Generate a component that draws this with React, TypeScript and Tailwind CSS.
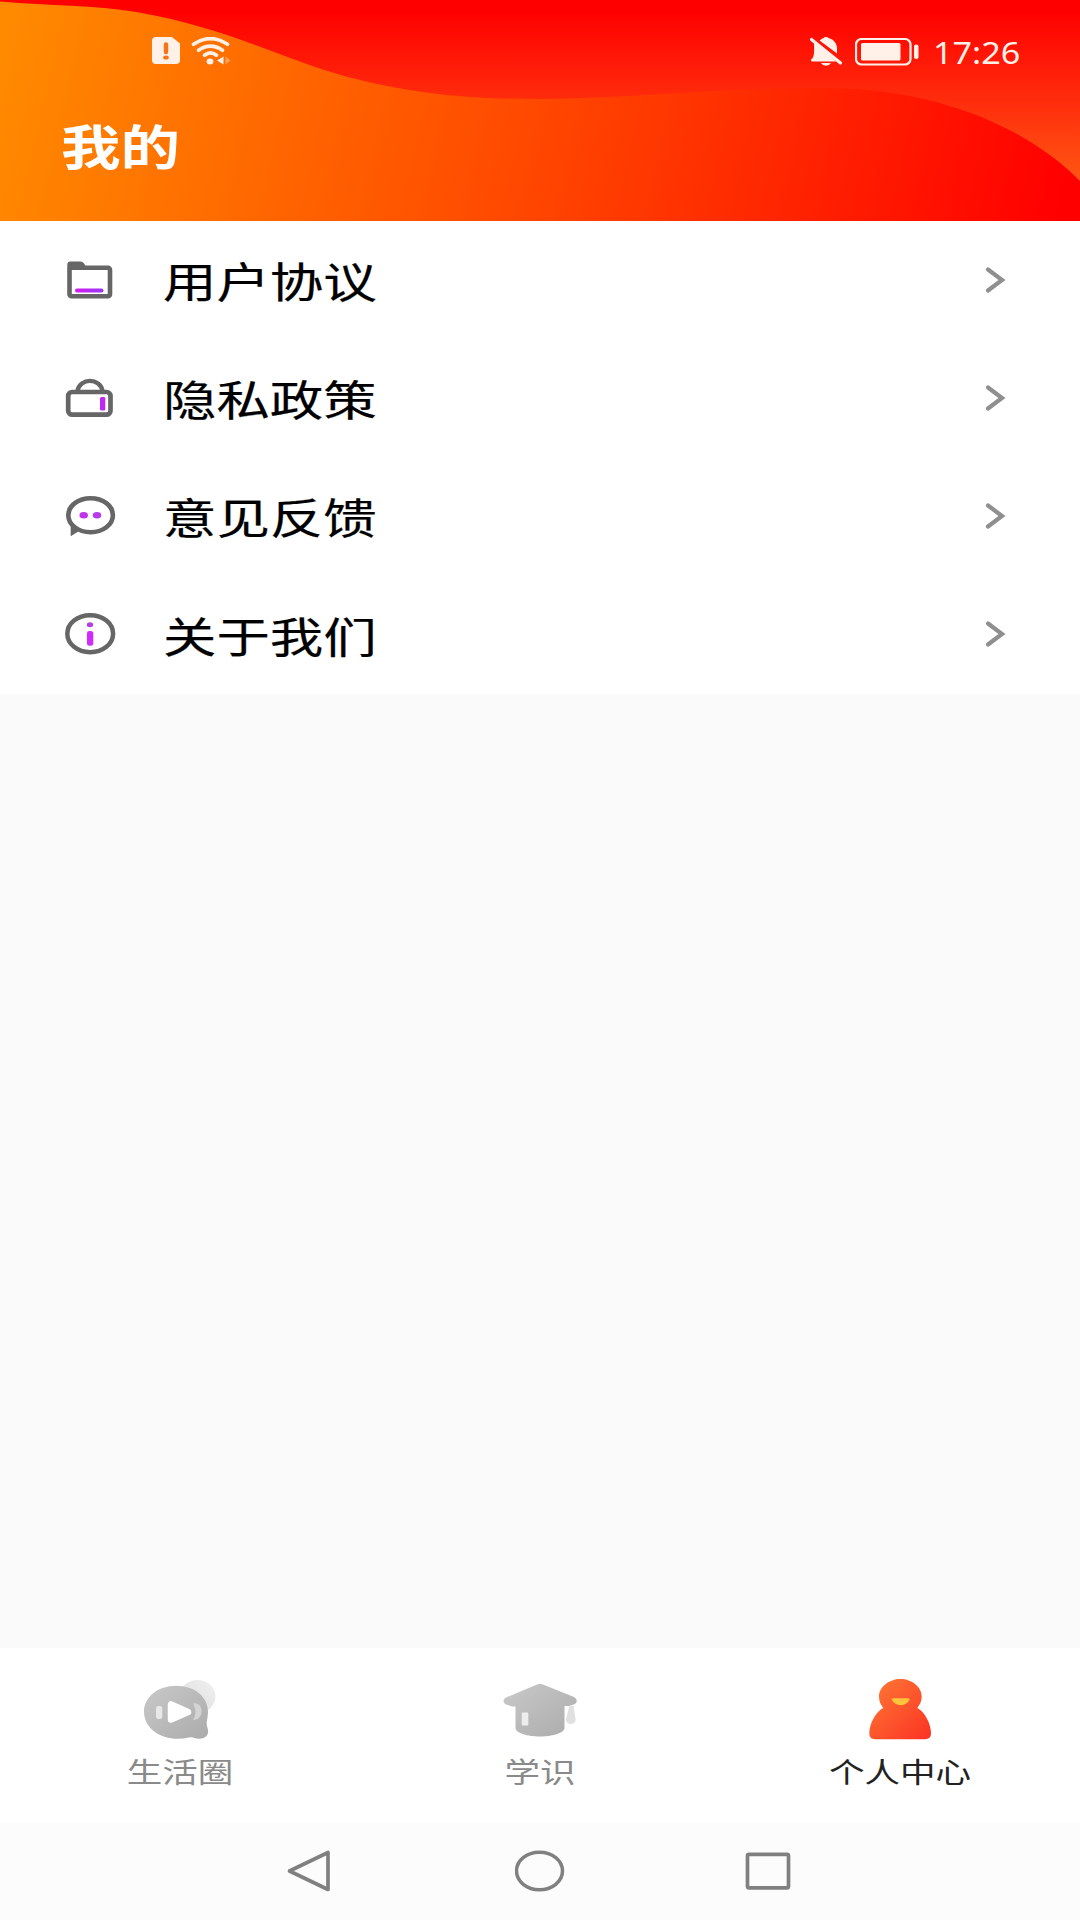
import React from 'react';

const StatusBar: React.FC = () => (
  <div className="flex h-[102px] items-center justify-between pl-[152px] pr-[60px] text-[#fff1e8]">
    <div className="flex items-center gap-[11px]">
      {/* SIM warning */}
      <svg className="h-7 w-7" viewBox="0 0 28 28" fill="none">
        <path d="M4 0h16l8 6.5V23a4 4 0 0 1-4 4H4a4 4 0 0 1-4-4V4a4 4 0 0 1 4-4z" fill="currentColor" />
        <path d="M14 7.5v7.5" stroke="#f97316" strokeWidth="4.4" strokeLinecap="round" />
        <ellipse cx="14" cy="20.5" rx="2.8" ry="2.1" fill="#f97316" />
      </svg>
      {/* Wi-Fi */}
      <svg className="h-7 w-10" viewBox="0 0 40 28" fill="none">
        <g stroke="currentColor" strokeWidth="3.7" strokeLinecap="round">
          <path d="M2.5 7.2Q19.5-4 36.5 7.2" />
          <path d="M7.5 13.2Q19.5 5 31.5 13.2" />
          <path d="M13.5 18.2Q19.5 13.6 25.5 18.2" />
        </g>
        <ellipse cx="19" cy="24.5" rx="3.4" ry="2.9" fill="currentColor" />
        <path d="M26 23.5l6.5-4v8z" fill="currentColor" />
        <path d="M34.5 19.5l5 4-5 4z" fill="currentColor" opacity=".4" />
      </svg>
    </div>
    <div className="flex items-center">
      {/* Muted bell */}
      <svg className="h-[30px] w-[34px]" viewBox="0 0 34 30" fill="none">
        <path d="M10.500 4.500C12 3.200 13 2.500 14.500 2 15 .5 19 .5 19.500 2 25 3.500 28 7.500 28 12.500v5z" fill="currentColor" />
        <path d="M5 5L27 25.500H3.500C1.500 25.500 1.500 23.500 3 22.500 5.500 20.500 5.200 16 5 5z" fill="currentColor" />
        <path d="M2.500 3.500l29 23.500" stroke="currentColor" strokeWidth="3.200" strokeLinecap="round" />
        <path d="M12 27h10q-1.500 2.700-5 2.700t-5-2.700z" fill="currentColor" />
      </svg>
      {/* Battery */}
      <svg className="ml-3 mr-3.5 mt-px h-7 w-16" viewBox="0 0 64 28" fill="none">
        <rect x="1" y="1" width="54.500" height="25.500" rx="5.500" stroke="currentColor" strokeWidth="2.200" />
        <rect x="6" y="5" width="39.500" height="17.500" rx="1.500" fill="currentColor" />
        <rect x="59" y="6.500" width="4.500" height="14.500" rx="2" fill="currentColor" />
      </svg>
      <div className="mt-[5px] w-[87px]">
        <span className="inline-block origin-left scale-x-[1.14] font-['Noto_Sans',sans-serif] text-[30px] leading-none">
          17:26
        </span>
      </div>
    </div>
  </div>
);

const Header: React.FC = () => (
  <header className="relative h-[221px] shrink-0">
    <svg className="absolute inset-0 h-full w-full" viewBox="0 0 1080 221" preserveAspectRatio="none">
      <defs>
        <linearGradient id="sky" x1="0" y1="0" x2="0" y2="1">
          <stop offset="0.05" stopColor="#ff0000" />
          <stop offset="0.45" stopColor="#ff2c0c" />
          <stop offset="0.85" stopColor="#ff5a14" />
        </linearGradient>
        <linearGradient id="wave" gradientUnits="userSpaceOnUse" x1="0" y1="60" x2="1040" y2="300">
          <stop offset="0" stopColor="#ff8a00" />
          <stop offset="0.5" stopColor="#ff4800" />
          <stop offset="1" stopColor="#ff0000" />
        </linearGradient>
      </defs>
      <path d="M0 0h1080v221H0z" fill="url(#sky)" />
      <path
        d="M0 1.500C50 6 95 5 136 12C225 27 280 58 344 76C410 94 470 99 540 99C640 98 740 86 843 88.500C945 92 1030 130 1080 181V221H0z"
        fill="url(#wave)"
      />
    </svg>
    <div className="relative">
      <StatusBar />
      <h1 className="mt-[17px] ml-[61px] inline-block origin-left scale-x-[1.24] font-['Noto_Sans_CJK_SC',sans-serif] text-[48px] font-bold leading-[50px] text-white">
        我的
      </h1>
    </div>
  </header>
);

const FolderIcon: React.FC = () => (
  <svg className="h-[60px] w-[60px]" viewBox="0 0 60 60" fill="none">
    <path d="M7.300 18V13.500q0-3 3-3h10q3 0 5 4l1 3z" fill="#666" />
    <rect x="9.500" y="16.700" width="40.500" height="28.600" rx="2" stroke="#666" strokeWidth="4.600" />
    <rect x="15" y="37.500" width="28.500" height="4" rx="2" fill="url(#violet)" />
    <defs>
      <linearGradient id="violet">
        <stop stopColor="#d21cf0" />
        <stop offset="1" stopColor="#9838f4" />
      </linearGradient>
    </defs>
  </svg>
);

const LockIcon: React.FC = () => (
  <svg className="h-[60px] w-[60px]" viewBox="0 0 60 60" fill="none">
    <path d="M17.500 22C19.500 8.500 40.500 8.500 42.500 22" stroke="#666" strokeWidth="4.400" />
    <rect x="8.200" y="23" width="42.300" height="22.700" rx="4" stroke="#666" strokeWidth="4.700" />
    <rect x="40" y="28" width="5.300" height="13.500" rx="1.500" fill="#c026f5" />
  </svg>
);

const FeedbackIcon: React.FC = () => (
  <svg className="h-[60px] w-[60px]" viewBox="0 0 60 60" fill="none">
    <ellipse cx="30.600" cy="28.200" rx="22.300" ry="17" stroke="#666" strokeWidth="4.600" />
    <path d="M10.700 37v12.300l8-5z" fill="#666" />
    <ellipse cx="23.700" cy="28.300" rx="4.200" ry="3.200" fill="#c234ec" />
    <ellipse cx="37" cy="28.300" rx="4.200" ry="3.200" fill="#b63cf0" />
  </svg>
);

const AboutIcon: React.FC = () => (
  <svg className="h-[60px] w-[60px]" viewBox="0 0 60 60" fill="none">
    <ellipse cx="30.200" cy="28.700" rx="22.900" ry="18.500" stroke="#666" strokeWidth="4.500" />
    <ellipse cx="30" cy="19.700" rx="3.200" ry="2.500" fill="#b23fe0" />
    <rect x="27" y="26" width="6.300" height="14.700" rx="2.500" fill="#cf2bfa" />
  </svg>
);

const menu = [
  { label: '用户协议', Icon: FolderIcon },
  { label: '隐私政策', Icon: LockIcon },
  { label: '意见反馈', Icon: FeedbackIcon },
  { label: '关于我们', Icon: AboutIcon },
];

const LifeIcon: React.FC = () => (
  <svg className="h-20 w-[90px]" viewBox="0 0 90 80" fill="none">
    <defs>
      <linearGradient id="gray" x1="0" y1="0" x2="1" y2="1">
        <stop stopColor="#c9c9c9" />
        <stop offset="1" stopColor="#ababab" />
      </linearGradient>
      <linearGradient id="bubble" x1="1" y1="0" x2="0" y2="1">
        <stop stopColor="#f0f0f0" />
        <stop offset="1" stopColor="#dcdcdc" />
      </linearGradient>
    </defs>
    <ellipse cx="62.500" cy="26.500" rx="18" ry="16.500" fill="url(#bubble)" />
    <path
      d="M41 15.700C60 15.700 73 27 73 42C73 48 70.500 53 72.500 58C75 65 70 69 64 68.700C59 68.300 58 66.500 54 67.500C31 73 9 61 9 41.500C9 27 23 15.700 41 15.700z"
      fill="url(#gray)"
    />
    <path d="M36 34.500v15l17-7.500z" fill="#fff" stroke="#fff" strokeWidth="6.500" strokeLinejoin="round" />
    <rect x="21" y="36" width="6.300" height="13" rx="2.500" fill="#e8e8e8" />
    <path d="M58 33.500c11-2.500 12 17 0 16.500q5-8 0-16.500z" fill="#d4d4d4" />
  </svg>
);

const StudyIcon: React.FC = () => (
  <svg className="h-20 w-[90px]" viewBox="0 0 90 80" fill="none">
    <path
      d="M42 14.500q3-1.500 6 0L79 27q5 3 1 7l-6 2h-4.500v22c0 5-13 8.500-24.700 8.500S20.500 63 20.500 58V36.500H17L10 34q-3.500-4 1-6.500z"
      fill="url(#gray)"
    />
    <rect x="26.700" y="42.500" width="6.600" height="13" rx="1" fill="#ededed" />
    <path d="M74.500 36h4l2.200 14q-1 4-5 4t-5-4z" fill="#e0e0e0" />
  </svg>
);

const UserIcon: React.FC = () => (
  <svg className="h-20 w-[90px]" viewBox="0 0 90 80" fill="none">
    <defs>
      <linearGradient id="fire" x1="0" y1="0" x2="1" y2="1">
        <stop stopColor="#ff7a35" />
        <stop offset="1" stopColor="#fb3224" />
      </linearGradient>
    </defs>
    <path
      d="M45.500 9C57 9 66.700 17 66.700 26.500C66.700 31 65 34.500 62.300 38C70 42 76 54 76 63.500Q76 69.200 70 69.200H20Q14.300 69.200 14.300 63.500C14.300 54 20.500 42 28.300 38C25.500 34.500 24 31 24 26.500C24 17 34 9 45.500 9z"
      fill="url(#fire)"
    />
    <path d="M38 28.300h15.500q1.500 0 1 1.500C51.500 37 40 37 36.700 29.800q-.3-1.500 1.300-1.500z" fill="#ffc23c" />
  </svg>
);

const tabs = [
  { label: '生活圈', Icon: LifeIcon, active: false },
  { label: '学识', Icon: StudyIcon, active: false },
  { label: '个人中心', Icon: UserIcon, active: true },
];

const App: React.FC = () => {
  return (
    <div className="flex h-[1920px] w-[1080px] flex-col overflow-hidden bg-[#fafafa] font-['Noto_Sans_CJK_SC',sans-serif]">
      <Header />

      {/* Menu */}
      <ul className="bg-white">
        {menu.map(({ label, Icon }) => (
          <li key={label} className="flex h-[118.2px] items-center pl-[60px] pr-[73px]">
            <div className="pt-px">
              <Icon />
            </div>
            <span className="ml-[43px] origin-left scale-x-[1.272] text-[42px] leading-none text-black [-webkit-text-stroke:0.2px]">
              {label}
            </span>
            <svg className="mb-px ml-auto h-[30px] w-[22px]" viewBox="0 0 22 30" fill="none">
              <path d="M3 4.500l14 10.500-14 10.500" stroke="#8f8f8f" strokeWidth="4.200" strokeLinecap="round" />
            </svg>
          </li>
        ))}
      </ul>

      {/* Tabs */}
      <nav className="mt-auto flex h-[174px] bg-white pt-[22px]">
        {tabs.map(({ label, Icon, active }) => (
          <div key={label} className="flex flex-1 flex-col items-center">
            <Icon />
            <span className={`mt-1.5 scale-x-[1.27] text-[28px] leading-[30px] ${active ? 'text-[#222]' : 'text-[#8a8a8a]'}`}>
              {label}
            </span>
          </div>
        ))}
      </nav>

      {/* System navigation */}
      <div className="flex h-[98px] items-center justify-between bg-[#fcfcfc] pl-[285px] pr-[289px]">
        <svg className="h-11 w-[50px]" viewBox="0 0 50 44" fill="none" stroke="#808080" strokeWidth="3.700" strokeLinejoin="round">
          <path d="M4.500 22L43 3.500v37z" />
        </svg>
        <svg className="h-11 w-[50px]" viewBox="0 0 50 44" fill="none" stroke="#808080" strokeWidth="3.500">
          <ellipse cx="24.500" cy="22" rx="23" ry="18.800" />
        </svg>
        <svg className="h-11 w-[46px]" viewBox="0 0 46 44" fill="none" stroke="#808080" strokeWidth="3.700">
          <rect x="2.500" y="5.300" width="41" height="33.500" rx="1.500" />
        </svg>
      </div>
    </div>
  );
};

export default App;
